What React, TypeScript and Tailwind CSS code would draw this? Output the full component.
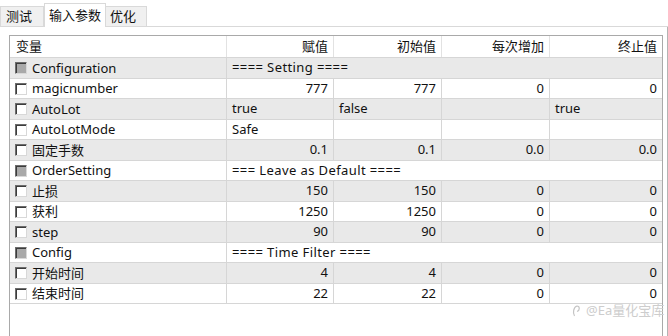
import React from 'react';

type Row = {
  name: string;
  group?: boolean;
  section?: string;
  vals?: [string, string, string, string];
  left?: boolean[];
};

const ROWS: Row[] = [
  { name: 'Configuration', group: true, section: '==== Setting ====' },
  { name: 'magicnumber', vals: ['777', '777', '0', '0'] },
  { name: 'AutoLot', vals: ['true', 'false', '', 'true'], left: [true, true, true, true] },
  { name: 'AutoLotMode', vals: ['Safe', '', '', ''], left: [true, true, true, true] },
  { name: '固定手数', vals: ['0.1', '0.1', '0.0', '0.0'] },
  { name: 'OrderSetting', group: true, section: '=== Leave as Default ====' },
  { name: '止损', vals: ['150', '150', '0', '0'] },
  { name: '获利', vals: ['1250', '1250', '0', '0'] },
  { name: 'step', vals: ['90', '90', '0', '0'] },
  { name: 'Config', group: true, section: '==== Time Filter ====' },
  { name: '开始时间', vals: ['4', '4', '0', '0'] },
  { name: '结束时间', vals: ['22', '22', '0', '0'] },
];

const COLS = ['w-[107px]', 'w-[108px]', 'w-[108px]', 'w-[112px]'];
const HEAD = ['赋值', '初始值', '每次增加', '终止值'];

// classic sunken win32 checkbox
const Check: React.FC<{ group?: boolean }> = ({ group }) => (
  <span className="w-[12px] h-[12px] shrink-0 border-t border-l border-t-[#6d6d6d] border-l-[#6d6d6d] border-r border-b border-r-[#d8d8d8] border-b-[#d8d8d8] flex">
    <span className={`flex-1 border-t border-l border-t-[#3c3c3c] border-l-[#3c3c3c] ${group ? 'bg-[#a9a9a9]' : 'bg-white'}`} />
  </span>
);

const App: React.FC = () => {
  return (
    <div
      className="relative w-[668px] h-[336px] overflow-hidden bg-white text-[13px] text-[#111]"
      style={{ fontFamily: '"Noto Sans", "Noto Sans CJK SC", sans-serif' }}
    >
      {/* tab strip */}
      <div className="h-[27px] flex items-end border-b border-[#d9d9d9] bg-white">
        <div className="h-[20px] w-[44px] flex items-center pl-[5px] bg-[#f0f0f0] border border-b-0 border-[#d9d9d9] leading-none">测试</div>
        <div className="h-[24px] w-[62px] -mb-px flex items-center justify-center bg-white border border-b-0 border-[#d9d9d9] leading-none">输入参数</div>
        <div className="h-[20px] w-[41px] flex items-center pl-[4px] bg-[#f0f0f0] border border-b-0 border-l-0 border-[#d9d9d9] leading-none">优化</div>
      </div>

      {/* panel */}
      <div className="h-[309px] w-[668px] border-r border-[#b4b4b4] pl-[9px] pt-[8px]">
        <div className="w-[654px] h-[320px] border border-[#a9a9a9] bg-white">
          {/* header */}
          <div className="h-[22px] flex border-b border-[#d6d6d6] bg-white">
            <div className="w-[217px] border-r border-[#e2e2e2] flex items-center pl-[6px]">变量</div>
            {HEAD.map((h, i) => (
              <div key={h} className={`${COLS[i]} ${i < 3 ? 'border-r border-[#e2e2e2]' : ''} flex items-center justify-end pr-[5px]`}>
                {h}
              </div>
            ))}
          </div>

          {ROWS.map((r, idx) => (
            <div
              key={r.name}
              className={`flex border-b border-[#d6d6d6] ${idx % 2 === 0 ? 'bg-[#e9e9e9] h-[21px]' : 'bg-white h-[20px]'}`}
            >
              <div className="w-[217px] border-r border-[#d6d6d6] flex items-center gap-[5px] pl-[5px]">
                <Check group={r.group} />
                <span className="leading-none">{r.name}</span>
              </div>
              {r.section ? (
                <div className="flex-1 flex items-center pl-[5px] whitespace-nowrap tracking-[0.4px]">{r.section}</div>
              ) : (
                r.vals!.map((v, i) => (
                  <div
                    key={i}
                    className={`${COLS[i]} ${i < 3 ? 'border-r border-[#d6d6d6]' : ''} flex items-center px-[5px] ${r.left ? 'justify-start' : 'justify-end'}`}
                  >
                    {v}
                  </div>
                ))
              )}
            </div>
          ))}
        </div>
      </div>

      {/* watermark */}
      <div className="absolute left-[572px] top-[304px] flex items-center gap-[5px] text-[13px] text-[#cdcdcd] leading-none whitespace-nowrap">
        <svg width="9" height="13" viewBox="0 0 9 13" fill="none" stroke="#c4c4c4" strokeWidth="1.2">
          <path d="M2.5 12 C0.5 9 1.5 3 5 2 C8 2 8 6.5 5 7.5" />
        </svg>
        <span>@Ea量化宝库</span>
      </div>
    </div>
  );
};

export default App;
